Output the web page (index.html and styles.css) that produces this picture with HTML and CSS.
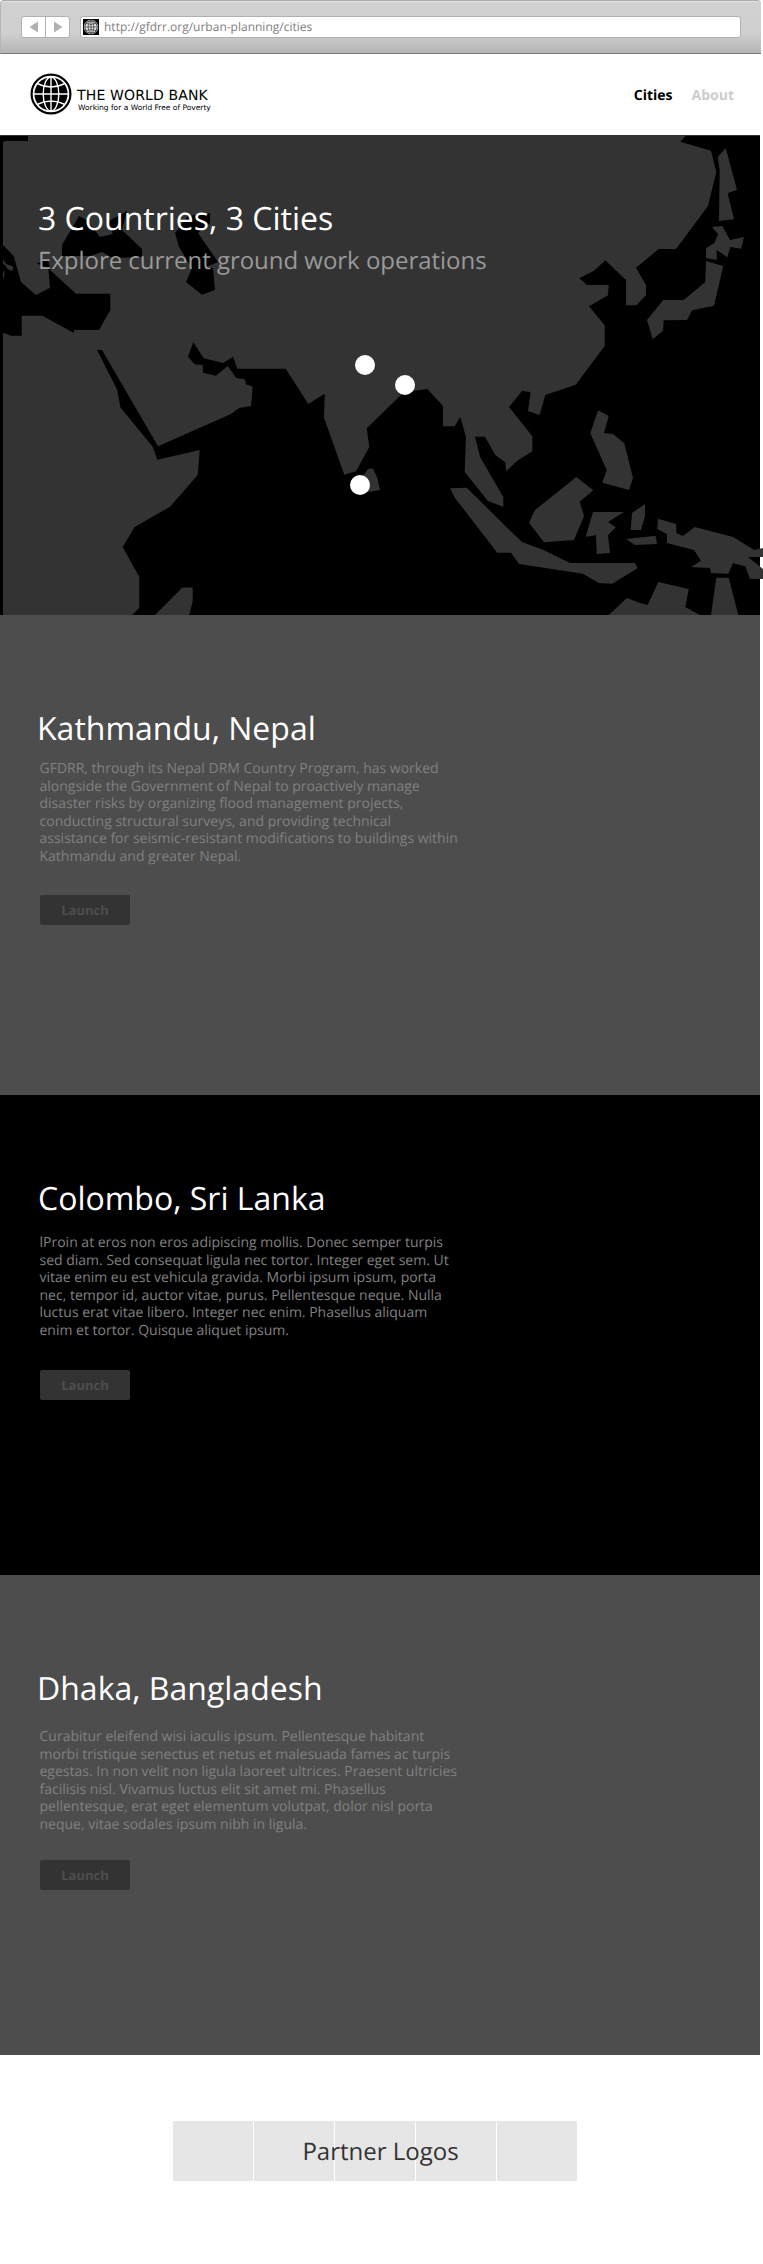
FILE: index.html
```
<!DOCTYPE html>
<html lang="en">
<head>
<meta charset="utf-8">
<title>Urban Planning Cities</title>
<link rel="stylesheet" href="styles.css">
</head>
<body>
<svg class="defs" width="0" height="0">
  <symbol id="globe" viewBox="0 0 42 42">
    <circle cx="21" cy="21" r="19.4" fill="none" stroke="currentColor" stroke-width="2.2"/>
    <circle cx="21" cy="21" r="16.6" fill="currentColor"/>
    <g fill="none" class="globe-lines" stroke-width="1.4">
      <path d="M21 4V38M4 21H38M7 10.500Q21 17.500 35 10.500M7 31.500Q21 24.500 35 31.500"/>
      <ellipse cx="21" cy="21" rx="7.800" ry="17"/>
    </g>
  </symbol>
</svg>
<div class="page">
  <div class="chrome">
    <div class="nav-buttons">
      <span><svg width="10" height="12"><path d="M0.500 6L9 0.500V11.500Z"/></svg></span>
      <span><svg width="10" height="12"><path d="M9.500 6L1 0.500V11.500Z"/></svg></span>
    </div>
    <div class="address">
      <svg class="favicon" width="16" height="16"><use href="#globe" x="0.500" y="0.500" width="15" height="15"/></svg>
      <span class="url">http://gfdrr.org/urban-planning/cities</span>
    </div>
  </div>

  <header class="header">
    <div class="brand">
      <svg class="brand-mark" width="42" height="42"><use href="#globe" width="42" height="42"/></svg>
      <div class="brand-text">
        <div class="brand-name">THE WORLD BANK</div>
        <div class="brand-tag">Working for a World Free of Poverty</div>
      </div>
    </div>
    <nav class="menu"><a class="active">Cities</a><a class="about">About</a></nav>
  </header>

  <section class="hero">
    <svg class="map" width="763" height="480" viewBox="0 135 763 480">
      <g class="land">
        <path d="M0 135H760V136H0Z"/>
        <path d="M3 142L5 141H28V135H686.500L680.300 141.700L711 150.700L716.300 172L708 206L676 249H658.700L636 267.700L646 285V295.300L636.300 305.300H626V280L605.300 260.300L594 270.700L579.300 278.300L587 285H608.700L608 295.300L589 306.300L604.700 325.300V346L575.700 384.700L545.300 395L539.700 415L528 411L530.700 392L522 391L509 407L532.300 436.300V451.300L517 461L506.300 471.300L505.300 462.300L495.300 455L485 436.700H475L480 456.700L503.300 497V506.700L488 501L464.700 472L466 437L460.300 417L454.700 426.300H443V406L427.300 389L413 391L402 394L366.700 428.300L369.300 447L356 471.300L344.300 474.700L324 417.700L324.700 393.700L308.300 404L285.700 368.700H237.300L233 356.700L223.300 363L203.700 358.300L193.300 342.300L188 356.700L194.700 364.300L202.700 365L203 372.700L216 375.700L227.700 366L236.300 378L245 379.300L246 384.300L252.700 386.700L251 406L239 408L231 414L158 446.300L102 350H97L117.300 390L120.300 407.300L152.700 446.700L157.300 459.700L199.700 450L197.700 475L170 506.700L134.700 527L122.700 547L139.300 577V607.700L132 615H3Z"/>
        <path d="M725.700 148L737 189.700L727.700 193.300L734 219.300L719 221L719.700 170L717.700 157Z"/>
        <path d="M712 227L722.300 226L730 240L744 237L741 248.700L730.300 247L727.300 257.300L716.700 250V260L706 258V248.300L714.700 242.700L718 234Z"/>
        <path d="M706 261L723.300 266L714 305.700L692 310.300L687 320L663.700 320.300L663 330.700L652.700 339.300L647 320L663.300 300H683.700L705.300 282Z"/>
        <path d="M598 410.300L608.700 416L604 433L613 434L624.300 443.300L633 478L629 490L602.300 482.700L606.700 470L590.300 433.300Z"/>
        <path d="M576.300 477L593.300 490.300L579.700 501.700L584 516L574 540L544 542.300L529 522.700L535 510Z"/>
        <path d="M593 512H624L608 522L615.700 527.300L608 535.300L610 553L596.700 554L596 535.300L585.700 536.700Z"/>
        <path d="M645 504V516L641 530H630.700L632 513Z"/>
        <path d="M626 539L655.700 535.700L657 544L635 545Z"/>
        <path d="M658 518.700L676.300 524V533L683 536L694.700 527L733 537L754.300 550L763 548V557H748L763 569V579L750 578.700L745.300 566.300L733 563.300L728.300 573.700L711 573L710 568L691 567L701 560.700L694 550L667 543V534.300L657.300 529Z"/>
        <path d="M450 488.300L466.700 487.700L503 523.700L522 542L543 549.700L570 563H634.700L637.700 568L612.300 583.700L599 583L582.700 573.700L519 564L511 552.700H497.300L455 498Z"/>
        <path d="M608.700 615L627 598L640 603L647.700 605L658.300 582L688.700 589L685.300 607L699.700 615Z"/>
        <path d="M716.300 577.700H728.700L738.300 615H711Z"/>
        <path d="M155 615L182.300 587.500H192.700V601L189.300 615Z"/>
        <path d="M363 476L368 469L372.700 468.300L377 477L380 490L366 492.500Z"/>
      </g>
      <g class="sea">
        <path d="M3 245L13.700 256L21 282L36 295L50 287.700L48.300 268L36.700 263.500L48 259L50 270L76 293.700H110.300V310L99 330H74V333L42.300 315.700H21.700V335.700H11L3 332.700Z"/>
        <path d="M62 245L79 216L88 221L100 237L113 234L107 222L127 211L122 230L142 249V257L113 258L102 252L90 256H62Z"/>
        <path d="M175 233L188 216L210 213V223L198 233L218 262L206 267L213 268L215 290L202 294.700L186 282L192 268L188 262L179 247Z"/>
      </g>
      <path class="land" d="M3 259L6 264L13 266.500L12.500 271L7.500 269L5 265L3 264ZM3 270L4.500 273L4 278H3Z"/>
      <g class="pins"><circle cx="365" cy="365" r="10"/><circle cx="405" cy="385" r="10"/><circle cx="360" cy="485" r="10"/></g>
    </svg>
    <div class="hero-copy">
      <h1 class="title">3 Countries, 3 Cities</h1>
      <p class="subtitle">Explore current ground work operations</p>
    </div>
  </section>

  <section class="city kathmandu">
    <h2 class="title">Kathmandu, Nepal</h2>
    <p class="body">GFDRR, through its Nepal DRM Country Program, has worked<br>alongside the Government of Nepal to proactively manage<br>disaster risks by organizing flood management projects,<br>conducting structural surveys, and providing technical<br>assistance for seismic-resistant modifications to buildings within<br>Kathmandu and greater Nepal.</p>
    <a class="launch">Launch</a>
  </section>

  <section class="city colombo">
    <h2 class="title">Colombo, Sri Lanka</h2>
    <p class="body">lProin at eros non eros adipiscing mollis. Donec semper turpis<br>sed diam. Sed consequat ligula nec tortor. Integer eget sem. Ut<br>vitae enim eu est vehicula gravida. Morbi ipsum ipsum, porta<br>nec, tempor id, auctor vitae, purus. Pellentesque neque. Nulla<br>luctus erat vitae libero. Integer nec enim. Phasellus aliquam<br>enim et tortor. Quisque aliquet ipsum.</p>
    <a class="launch">Launch</a>
  </section>

  <section class="city dhaka">
    <h2 class="title">Dhaka, Bangladesh</h2>
    <p class="body">Curabitur eleifend wisi iaculis ipsum. Pellentesque habitant<br>morbi tristique senectus et netus et malesuada fames ac turpis<br>egestas. In non velit non ligula laoreet ultrices. Praesent ultricies<br>facilisis nisl. Vivamus luctus elit sit amet mi. Phasellus<br>pellentesque, erat eget elementum volutpat, dolor nisl porta<br>neque, vitae sodales ipsum nibh in ligula.</p>
    <a class="launch">Launch</a>
  </section>

  <footer class="partners">
    <div class="logos">
      <i></i><i></i><i></i><i></i><i></i>
      <span class="partners-label">Partner Logos</span>
    </div>
  </footer>
</div>
</body>
</html>
```
FILE: styles.css
```
* { box-sizing: border-box; }
body { margin: 0; background: #fff; font-family: "Open Sans", sans-serif; text-rendering: geometricPrecision; }
h1, h2, p { margin: 0; font-weight: 400; white-space: nowrap; }
.defs { position: absolute; }
.page { width: 763px; height: 2264px; overflow: hidden; }

.chrome {
  width: 761px; height: 54px; display: flex; gap: 10px; padding: 15px 0 0 21px;
  border-top: 1px solid #a9a9a9; border-bottom: 1px solid #787878;
  border-left: 1px solid #b5b5b5;
  border-radius: 4px 4px 0 0;
  box-shadow: inset 0 1px #e2e2e2;
  background: linear-gradient(#d1d1d1 0, #d0d0d0 60%, #b5b5b5 100%);
}
.nav-buttons {
  display: flex; width: 49px; height: 22px; margin-left: -1px;
  border: 1px solid #b0b0b0; border-radius: 3px; background: #fff;
}
.nav-buttons span { flex: 1; display: flex; align-items: center; justify-content: center; }
.nav-buttons span + span { border-left: 1px solid #b0b0b0; }
.nav-buttons svg { fill: #b0b0b0; }
.address {
  width: 661px; height: 22px; display: flex; align-items: center;
  padding-left: 2px; border: 1px solid #b0b0b0; border-radius: 3px; background: #fff;
}
.favicon { background: #000; color: #ddd; --gap: #000; flex: none; }
.url { margin-left: 5px; font-size: 12px; line-height: 18px; color: #808080; white-space: nowrap; }

.globe-lines { stroke: var(--gap, #fff); }
.header {
  width: 763px; height: 81px; display: flex; justify-content: space-between;
  align-items: flex-start; padding: 19px 29px 0 30px;
}
.brand { display: flex; gap: 5px; }
.brand-mark { color: #000; flex: none; }
.brand-text { padding-top: 15px; font-family: "DejaVu Sans", sans-serif; color: #000; white-space: nowrap; }
.brand-name { font-size: 14px; line-height: 16px; letter-spacing: 0.15px; }
.brand-tag { margin: -1px 0 0 1px; font-size: 7.500px; line-height: 10px; }
.menu { display: flex; gap: 19px; padding-top: 13px; font-size: 14px; line-height: 20px; font-weight: 700; color: #000; }
.about { color: #ccc; }

.hero { width: 763px; height: 480px; position: relative; background: linear-gradient(#000, #000) 0 0 / 760px 100% no-repeat; }
.map { position: absolute; left: 0; top: 0; }
.land { fill: #333; }
.sea { fill: #000; }
.pins { fill: #fff; }
.hero-copy { position: relative; padding: 62px 0 0 38px; }
.title { font-size: 32px; line-height: 44px; color: #fff; }
.subtitle { margin-top: 4px; font-size: 24px; line-height: 32px; letter-spacing: -0.03px; color: #999; }

.city { width: 760px; height: 480px; padding: 92px 0 0 37px; background: #4d4d4d; }
.city .body { margin: 9px 0 0 2.500px; font-size: 14px; line-height: 17.500px; color: #808080; }
.launch {
  display: flex; align-items: center; justify-content: center;
  width: 90px; height: 30px; margin: 30px 0 0 3px; padding-bottom: 1px; border-radius: 2px;
  background: #333; color: #4d4d4d; font-size: 13px; line-height: 18px; font-weight: 700;
}
.city.kathmandu .launch { margin-top: 30px; }
.colombo { padding-top: 82px; background: #000; }
.colombo .title { margin-left: 1px; }
.colombo .body { margin-top: 13px; }
.colombo .launch { margin-top: 31px; }
.dhaka .body { margin-top: 17px; }
.dhaka .launch { margin-top: 27px; }

.partners { padding: 66px 0 0 173px; }
.logos { position: relative; width: 404px; height: 60px; display: grid; grid-template-columns: repeat(5, 80px); gap: 1px; }
.logos i { background: #e6e6e6; }
.partners-label { position: absolute; left: 7px; right: 0; top: 15px; text-align: center; text-indent: 4px; font-size: 24px; line-height: 32px; color: #333; }
```
